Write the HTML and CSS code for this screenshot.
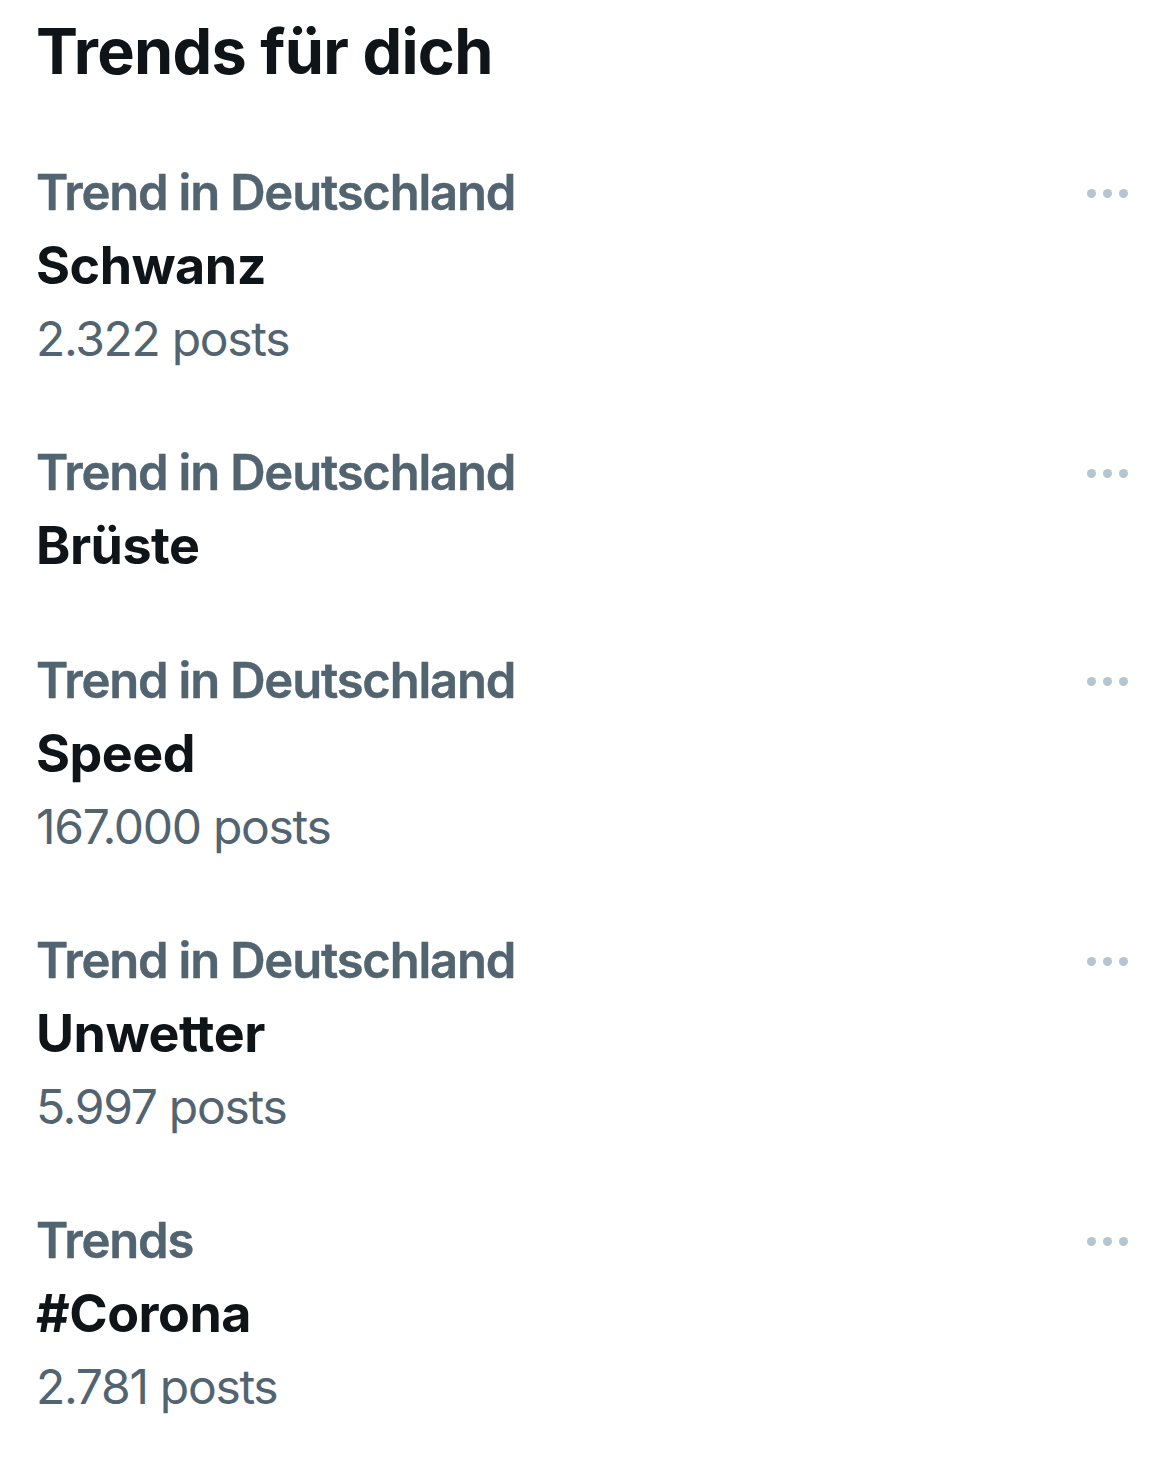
FILE: index.html
```html
<!DOCTYPE html>
<html lang="de">
<head>
<meta charset="utf-8">
<title>Trends für dich</title>
<link rel="stylesheet" href="styles.css">
</head>
<body>
<main class="panel">
  <h1 class="title">Trends für dich</h1>
  <ul class="trends">
    <li class="trend">
      <div class="trend-head"><span class="cat">Trend in Deutschland</span><span class="more"><i></i><i></i><i></i></span></div>
      <div class="name">Schwanz</div>
      <div class="count">2.322 posts</div>
    </li>
    <li class="trend">
      <div class="trend-head"><span class="cat">Trend in Deutschland</span><span class="more"><i></i><i></i><i></i></span></div>
      <div class="name">Brüste</div>
    </li>
    <li class="trend">
      <div class="trend-head"><span class="cat">Trend in Deutschland</span><span class="more"><i></i><i></i><i></i></span></div>
      <div class="name">Speed</div>
      <div class="count">167.000 posts</div>
    </li>
    <li class="trend">
      <div class="trend-head"><span class="cat">Trend in Deutschland</span><span class="more"><i></i><i></i><i></i></span></div>
      <div class="name">Unwetter</div>
      <div class="count">5.997 posts</div>
    </li>
    <li class="trend">
      <div class="trend-head"><span class="cat">Trends</span><span class="more"><i></i><i></i><i></i></span></div>
      <div class="name">#Corona</div>
      <div class="count">2.781 posts</div>
    </li>
  </ul>
</main>
</body>
</html>
```

FILE: styles.css
```css
html, body {
  margin: 0;
  padding: 0;
  background: #ffffff;
}
body {
  font-family: Inter, "Noto Sans", "Liberation Sans", sans-serif;
  color: #0f1419;
}
.panel {
  padding: 13px 43px 0 36px;
}
.title {
  margin: 0;
  font-size: 63px;
  line-height: 76px;
  font-weight: 700;
  letter-spacing: -0.7px;
}
.trends {
  list-style: none;
  margin: 68px 0 0 0;
  padding: 0;
  display: flex;
  flex-direction: column;
  gap: 62px;
}
.trend-head {
  display: flex;
  justify-content: space-between;
  align-items: center;
}
.cat {
  font-size: 49px;
  line-height: 72px;
  font-weight: 600;
  color: #536471;
  letter-spacing: -1.2px;
  -webkit-text-stroke: 0.4px #536471;
}
.more {
  display: flex;
  gap: 7px;
}
.more i {
  display: block;
  width: 9px;
  height: 9px;
  border-radius: 50%;
  background: #b6c5d2;
}
.name {
  font-size: 52px;
  line-height: 74px;
  font-weight: 700;
  letter-spacing: -0.5px;
}
.count {
  font-size: 48px;
  line-height: 72px;
  font-weight: 400;
  color: #536471;
  letter-spacing: -1.3px;
}
```
